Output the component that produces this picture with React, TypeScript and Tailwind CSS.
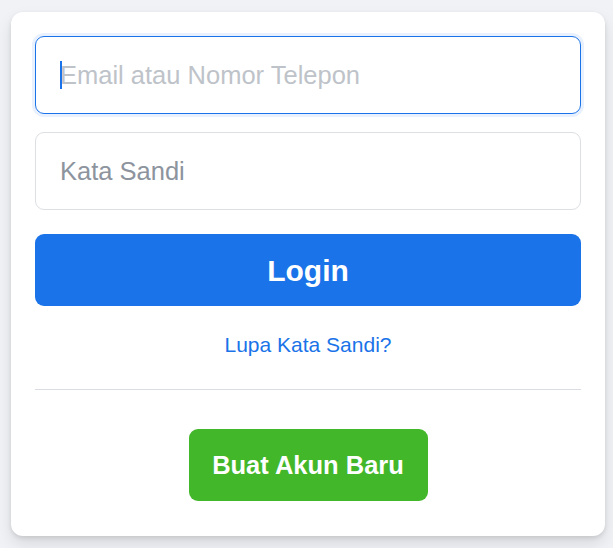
export default function App() {
  return (
    <div
      className="min-h-screen bg-[#f0f2f5] pt-[12px] pl-[11px]"
      style={{ fontFamily: "'Liberation Sans', Arial, Helvetica, sans-serif" }}
    >
      <div className="w-[594px] rounded-[12px] bg-white px-[24px] pt-[24px] pb-[35px] shadow-[0_2px_4px_rgba(0,0,0,0.1),0_8px_16px_rgba(0,0,0,0.1)]">
        <form className="flex flex-col" onSubmit={(e) => e.preventDefault()}>
          {/* Email (focused) */}
          <div className="relative">
            <input
              type="text"
              placeholder="Email atau Nomor Telepon"
              className="block h-[78px] w-full rounded-[9px] border border-[#1a73e8] px-[24px] text-[25.5px] text-[#1c1e21] outline-none shadow-[0_0_0_3px_#e8f1fd] placeholder:text-[#bec3c9]"
            />
            <span className="pointer-events-none absolute left-[25px] top-[25px] h-[28px] w-[2px] bg-[#1a73e8]" />
          </div>

          <input
            type="password"
            placeholder="Kata Sandi"
            className="mt-[18px] block h-[78px] w-full rounded-[9px] border border-[#dddfe2] px-[24px] text-[25.5px] text-[#1c1e21] outline-none placeholder:text-[#8d949e]"
          />

          <button
            type="submit"
            className="mt-[24px] h-[72px] w-full rounded-[9px] bg-[#1a73e8] text-[30px] font-bold text-white"
          >
            Login
          </button>
        </form>

        <div className="mt-[27px] text-center text-[21px] leading-[24px]">
          <a href="#" className="text-[#1a73e8]">
            Lupa Kata Sandi?
          </a>
        </div>

        <div className="mt-[32px] h-px bg-[#dadde1]" />

        <div className="mt-[39px] flex justify-center">
          <button
            type="button"
            className="h-[72px] w-[239px] rounded-[9px] bg-[#42b72a] text-[25.5px] font-bold text-white"
          >
            Buat Akun Baru
          </button>
        </div>
      </div>
    </div>
  );
}
